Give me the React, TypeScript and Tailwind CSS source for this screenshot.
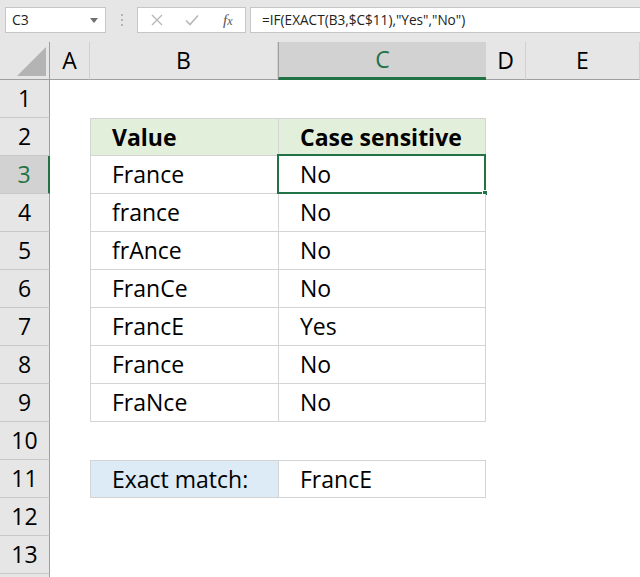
import React from 'react';

type Row = {
  n: number;
  b?: string;
  c?: string;
  kind?: 'head' | 'body' | 'match';
  first?: boolean;
};

const rows: Row[] = [
  { n: 1 },
  { n: 2, b: 'Value', c: 'Case sensitive', kind: 'head', first: true },
  { n: 3, b: 'France', c: 'No', kind: 'body' },
  { n: 4, b: 'france', c: 'No', kind: 'body' },
  { n: 5, b: 'frAnce', c: 'No', kind: 'body' },
  { n: 6, b: 'FranCe', c: 'No', kind: 'body' },
  { n: 7, b: 'FrancE', c: 'Yes', kind: 'body' },
  { n: 8, b: 'France', c: 'No', kind: 'body' },
  { n: 9, b: 'FraNce', c: 'No', kind: 'body' },
  { n: 10 },
  { n: 11, b: 'Exact match:', c: 'FrancE', kind: 'match', first: true },
  { n: 12 },
  { n: 13 },
  { n: 14 },
];

const columns = [
  { key: 'A', w: 'w-[40px]' },
  { key: 'B', w: 'w-[188px]' },
  { key: 'C', w: 'w-[208px]' },
  { key: 'D', w: 'w-[40px]' },
  { key: 'E', w: 'w-[114px]' },
];

function FormulaBar() {
  return (
    <div className="h-[42px] shrink-0 bg-[#e6e6e6] flex items-start pt-[7px]">
      {/* Name box */}
      <div className="ml-[5px] w-[101px] h-[26px] bg-white border border-[#c6c6c6] flex items-center justify-between pl-[6px] pr-[7px]">
        <span className="text-[14px] text-[#222]">C3</span>
        <span className="w-0 h-0 border-l-[4px] border-r-[4px] border-t-[5px] border-l-transparent border-r-transparent border-t-[#6f6f6f]" />
      </div>
      {/* Grip dots */}
      <div className="w-[31px] h-[26px] flex flex-col items-center justify-center gap-[3px]">
        <span className="w-[2px] h-[2px] bg-[#b4b4b4]" />
        <span className="w-[2px] h-[2px] bg-[#b4b4b4]" />
        <span className="w-[2px] h-[2px] bg-[#b4b4b4]" />
      </div>
      {/* Cancel / enter / fx */}
      <div className="w-[109px] h-[26px] bg-white border border-[#c6c6c6] flex items-center">
        <svg width="12" height="12" viewBox="0 0 12 12" className="ml-[13px]">
          <path d="M1 1 L11 11 M11 1 L1 11" stroke="#b8b8b8" strokeWidth="1.4" />
        </svg>
        <svg width="14" height="12" viewBox="0 0 14 12" className="ml-[22px]">
          <path d="M1 6.5 L5 10.5 L13 1.5" stroke="#b8b8b8" strokeWidth="1.6" fill="none" />
        </svg>
        <span className="ml-[24px] font-['Liberation_Serif',serif] italic text-[15px] text-[#555] leading-none">
          f<span className="text-[12px]">x</span>
        </span>
      </div>
      {/* Formula input */}
      <div className="ml-[4px] flex-1 h-[26px] bg-white border border-[#c6c6c6] border-r-0 flex items-center pl-[11px]">
        <span className="text-[13.6px] text-[#222] whitespace-nowrap">
          =IF(EXACT(B3,$C$11),"Yes","No")
        </span>
      </div>
    </div>
  );
}

function ColumnHeaders() {
  return (
    <div className="flex h-[38px] shrink-0">
      <div className="w-[50px] h-full bg-[#e6e6e6] border-r border-b border-[#9f9f9f] flex items-end justify-end pr-[3px] pb-[3px]">
        <svg width="29" height="29" viewBox="0 0 29 29">
          <polygon points="29,0 29,29 0,29" fill="#b4b4b4" />
        </svg>
      </div>
      {columns.map((col) => {
        const sel = col.key === 'C';
        return (
          <div
            key={col.key}
            className={`${col.w} h-full flex items-center justify-center text-[23px] ${
              sel
                ? 'bg-[#d2d2d2] text-[#217346] border-l border-l-[#a0a0a0] border-b-[3px] border-b-[#217346]'
                : 'bg-[#e6e6e6] text-black border-r border-r-[#d0d0d0] border-b border-b-[#9f9f9f]'
            }`}
          >
            {col.key}
          </div>
        );
      })}
    </div>
  );
}

function SheetRow({ row }: { row: Row }) {
  const sel = row.n === 3;
  const hasTable = !!row.kind;
  const top = row.first ? 'border-t' : '';
  const bBg =
    row.kind === 'head' ? 'bg-[#e2efda]' : row.kind === 'match' ? 'bg-[#ddebf7]' : 'bg-white';
  const cBg = row.kind === 'head' ? 'bg-[#e2efda]' : 'bg-white';
  const weight = row.kind === 'head' ? 'font-bold' : '';

  return (
    <div className="flex h-[38px] shrink-0">
      <div
        className={`w-[50px] h-full flex items-center justify-center text-[23px] border-b border-b-[#c8c8c8] ${
          sel
            ? 'bg-[#d2d2d2] text-[#217346] border-r-2 border-r-[#217346]'
            : 'bg-[#e6e6e6] text-black border-r border-r-[#9f9f9f]'
        }`}
      >
        {row.n < 14 ? row.n : ''}
      </div>
      <div className="w-[40px] h-full" />
      {hasTable ? (
        <>
          <div
            className={`w-[188px] h-full flex items-center pl-[21px] border-l border-b ${top} border-[#d4d4d4] ${bBg} ${weight}`}
          >
            {row.b}
          </div>
          <div
            className={`relative w-[208px] h-full flex items-center pl-[21px] border-l border-r border-b ${top} border-[#d4d4d4] ${cBg} ${weight}`}
          >
            {row.c}
            {sel && (
              <div className="absolute left-[-2px] top-[-2px] right-[-1px] bottom-[-1px] border-2 border-[#217346]">
                <div className="absolute right-[-4px] bottom-[-4px] w-[6px] h-[6px] bg-[#217346] border border-white" />
              </div>
            )}
          </div>
        </>
      ) : (
        <>
          <div className="w-[188px] h-full" />
          <div className="w-[208px] h-full" />
        </>
      )}
      <div className="w-[40px] h-full" />
      <div className="w-[114px] h-full" />
    </div>
  );
}

export default function App() {
  return (
    <div className="w-[640px] h-[577px] overflow-hidden bg-white flex flex-col font-['Open_Sans',sans-serif] text-[23px] text-black leading-none">
      <FormulaBar />
      <ColumnHeaders />
      {rows.map((r) => (
        <SheetRow key={r.n} row={r} />
      ))}
    </div>
  );
}
